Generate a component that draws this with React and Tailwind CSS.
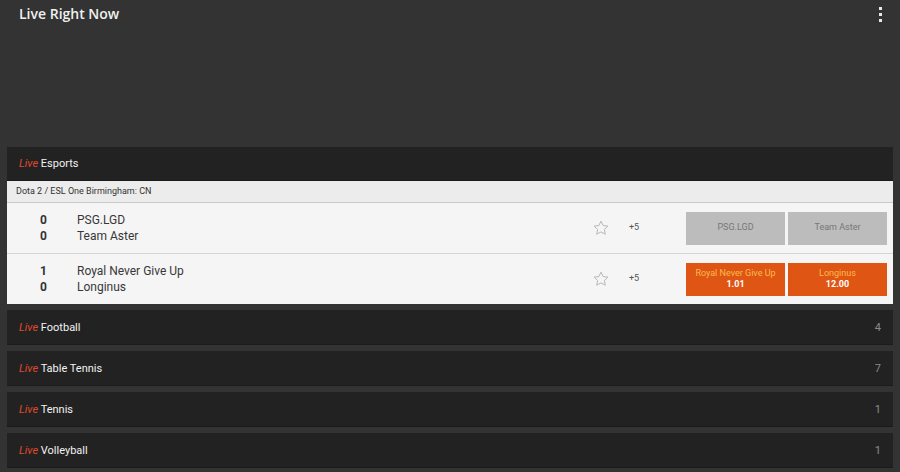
import { useState } from "react";

const matches = [
  {
    home: "PSG.LGD",
    away: "Team Aster",
    scoreHome: 0,
    scoreAway: 0,
    markets: "+5",
    odds: null,
  },
  {
    home: "Royal Never Give Up",
    away: "Longinus",
    scoreHome: 1,
    scoreAway: 0,
    markets: "+5",
    odds: ["1.01", "12.00"],
  },
];

const sports = [
  { name: "Football", count: 4 },
  { name: "Table Tennis", count: 7 },
  { name: "Tennis", count: 1 },
  { name: "Volleyball", count: 1 },
];

function Star() {
  return (
    <svg width="18" height="18" viewBox="0 0 24 24" fill="none" stroke="#b5b5b5" strokeWidth="1.3" strokeLinejoin="round">
      <path d="M12 2.8l2.8 5.9 6.4.8-4.7 4.4 1.2 6.4L12 17.2l-5.7 3.1 1.2-6.4-4.7-4.4 6.4-.8z" />
    </svg>
  );
}

function SectionHeader({ name, count, tall }) {
  return (
    <div className={`flex items-center justify-between px-3 bg-[#222222] border-b border-[#1b1b1b] ${tall ? "h-[35px]" : "h-[34px]"}`}>
      <div className="text-[11px] pt-[2px]">
        <span className="italic text-[#e0492a]">Live</span>{" "}
        <span className="text-[#f2f2f2]">{name}</span>
      </div>
      {count !== undefined && <span className="text-[11px] text-[#8a8a8a] pt-[2px]">{count}</span>}
    </div>
  );
}

function MatchRow({ m, last }) {
  const [fav, setFav] = useState(false);
  return (
    <div className={`flex items-center bg-[#f5f5f5] ${last ? "h-[50px]" : "h-[51px] border-b border-[#d6d6d6]"}`}>
      <div className="w-[70px] flex flex-col items-center pl-[3px] text-[12px] font-bold text-[#333] leading-[16px]">
        <span>{m.scoreHome}</span>
        <span>{m.scoreAway}</span>
      </div>
      <div className="flex-1 flex flex-col text-[12px] text-[#383838] leading-[16px]">
        <span>{m.home}</span>
        <span>{m.away}</span>
      </div>
      <button onClick={() => setFav(!fav)} className="w-[24px] flex justify-center">
        <Star />
      </button>
      <span className="w-[73px] pl-[16px] text-[9px] text-[#555]">{m.markets}</span>
      <div className="flex gap-[3px] pr-[6px]">
        {m.odds ? (
          <>
            <button className="w-[99px] h-[33px] bg-[#df5513] flex flex-col items-center justify-center leading-[11px]">
              <span className="text-[9px] text-[#fbbb4f]">{m.home}</span>
              <span className="text-[9px] font-bold text-white">{m.odds[0]}</span>
            </button>
            <button className="w-[99px] h-[33px] bg-[#df5513] flex flex-col items-center justify-center leading-[11px]">
              <span className="text-[9px] text-[#fbbb4f]">{m.away}</span>
              <span className="text-[9px] font-bold text-white">{m.odds[1]}</span>
            </button>
          </>
        ) : (
          <>
            <button className="w-[99px] h-[33px] bg-[#bcbcbc] text-[9px] text-[#777]">{m.home}</button>
            <button className="w-[99px] h-[33px] bg-[#bcbcbc] text-[9px] text-[#777]">{m.away}</button>
          </>
        )}
      </div>
    </div>
  );
}

export default function App() {
  return (
    <div className="w-[900px] h-[472px] bg-[#333333] overflow-hidden" style={{ fontFamily: "Roboto, 'Liberation Sans', sans-serif" }}>
      <div className="h-[147px] flex justify-between pl-[19px] pr-[18px] pt-[3px]">
        <h1 className="text-[14px] font-semibold text-[#f0f0f0]" style={{ fontFamily: "'Open Sans', sans-serif" }}>
          Live Right Now
        </h1>
        <div className="flex flex-col gap-[3px] pt-[4px]">
          <span className="w-[3px] h-[3px] bg-[#e8e8e8]" />
          <span className="w-[3px] h-[3px] bg-[#e8e8e8]" />
          <span className="w-[3px] h-[3px] bg-[#e8e8e8]" />
        </div>
      </div>
      <div className="px-[7px] flex flex-col gap-[6px]">
        <div className="bg-[#f5f5f5]">
          <SectionHeader name="Esports" />
          <div className="h-[22px] flex items-center px-[9px] bg-[#ececec] border-b border-[#c9c9c9] text-[9px] text-[#333]">
            Dota 2 / ESL One Birmingham: CN
          </div>
          {matches.map((m, i) => (
            <MatchRow key={m.home} m={m} last={i === matches.length - 1} />
          ))}
        </div>
        {sports.map((s) => (
          <SectionHeader key={s.name} name={s.name} count={s.count} tall />
        ))}
      </div>
    </div>
  );
}
